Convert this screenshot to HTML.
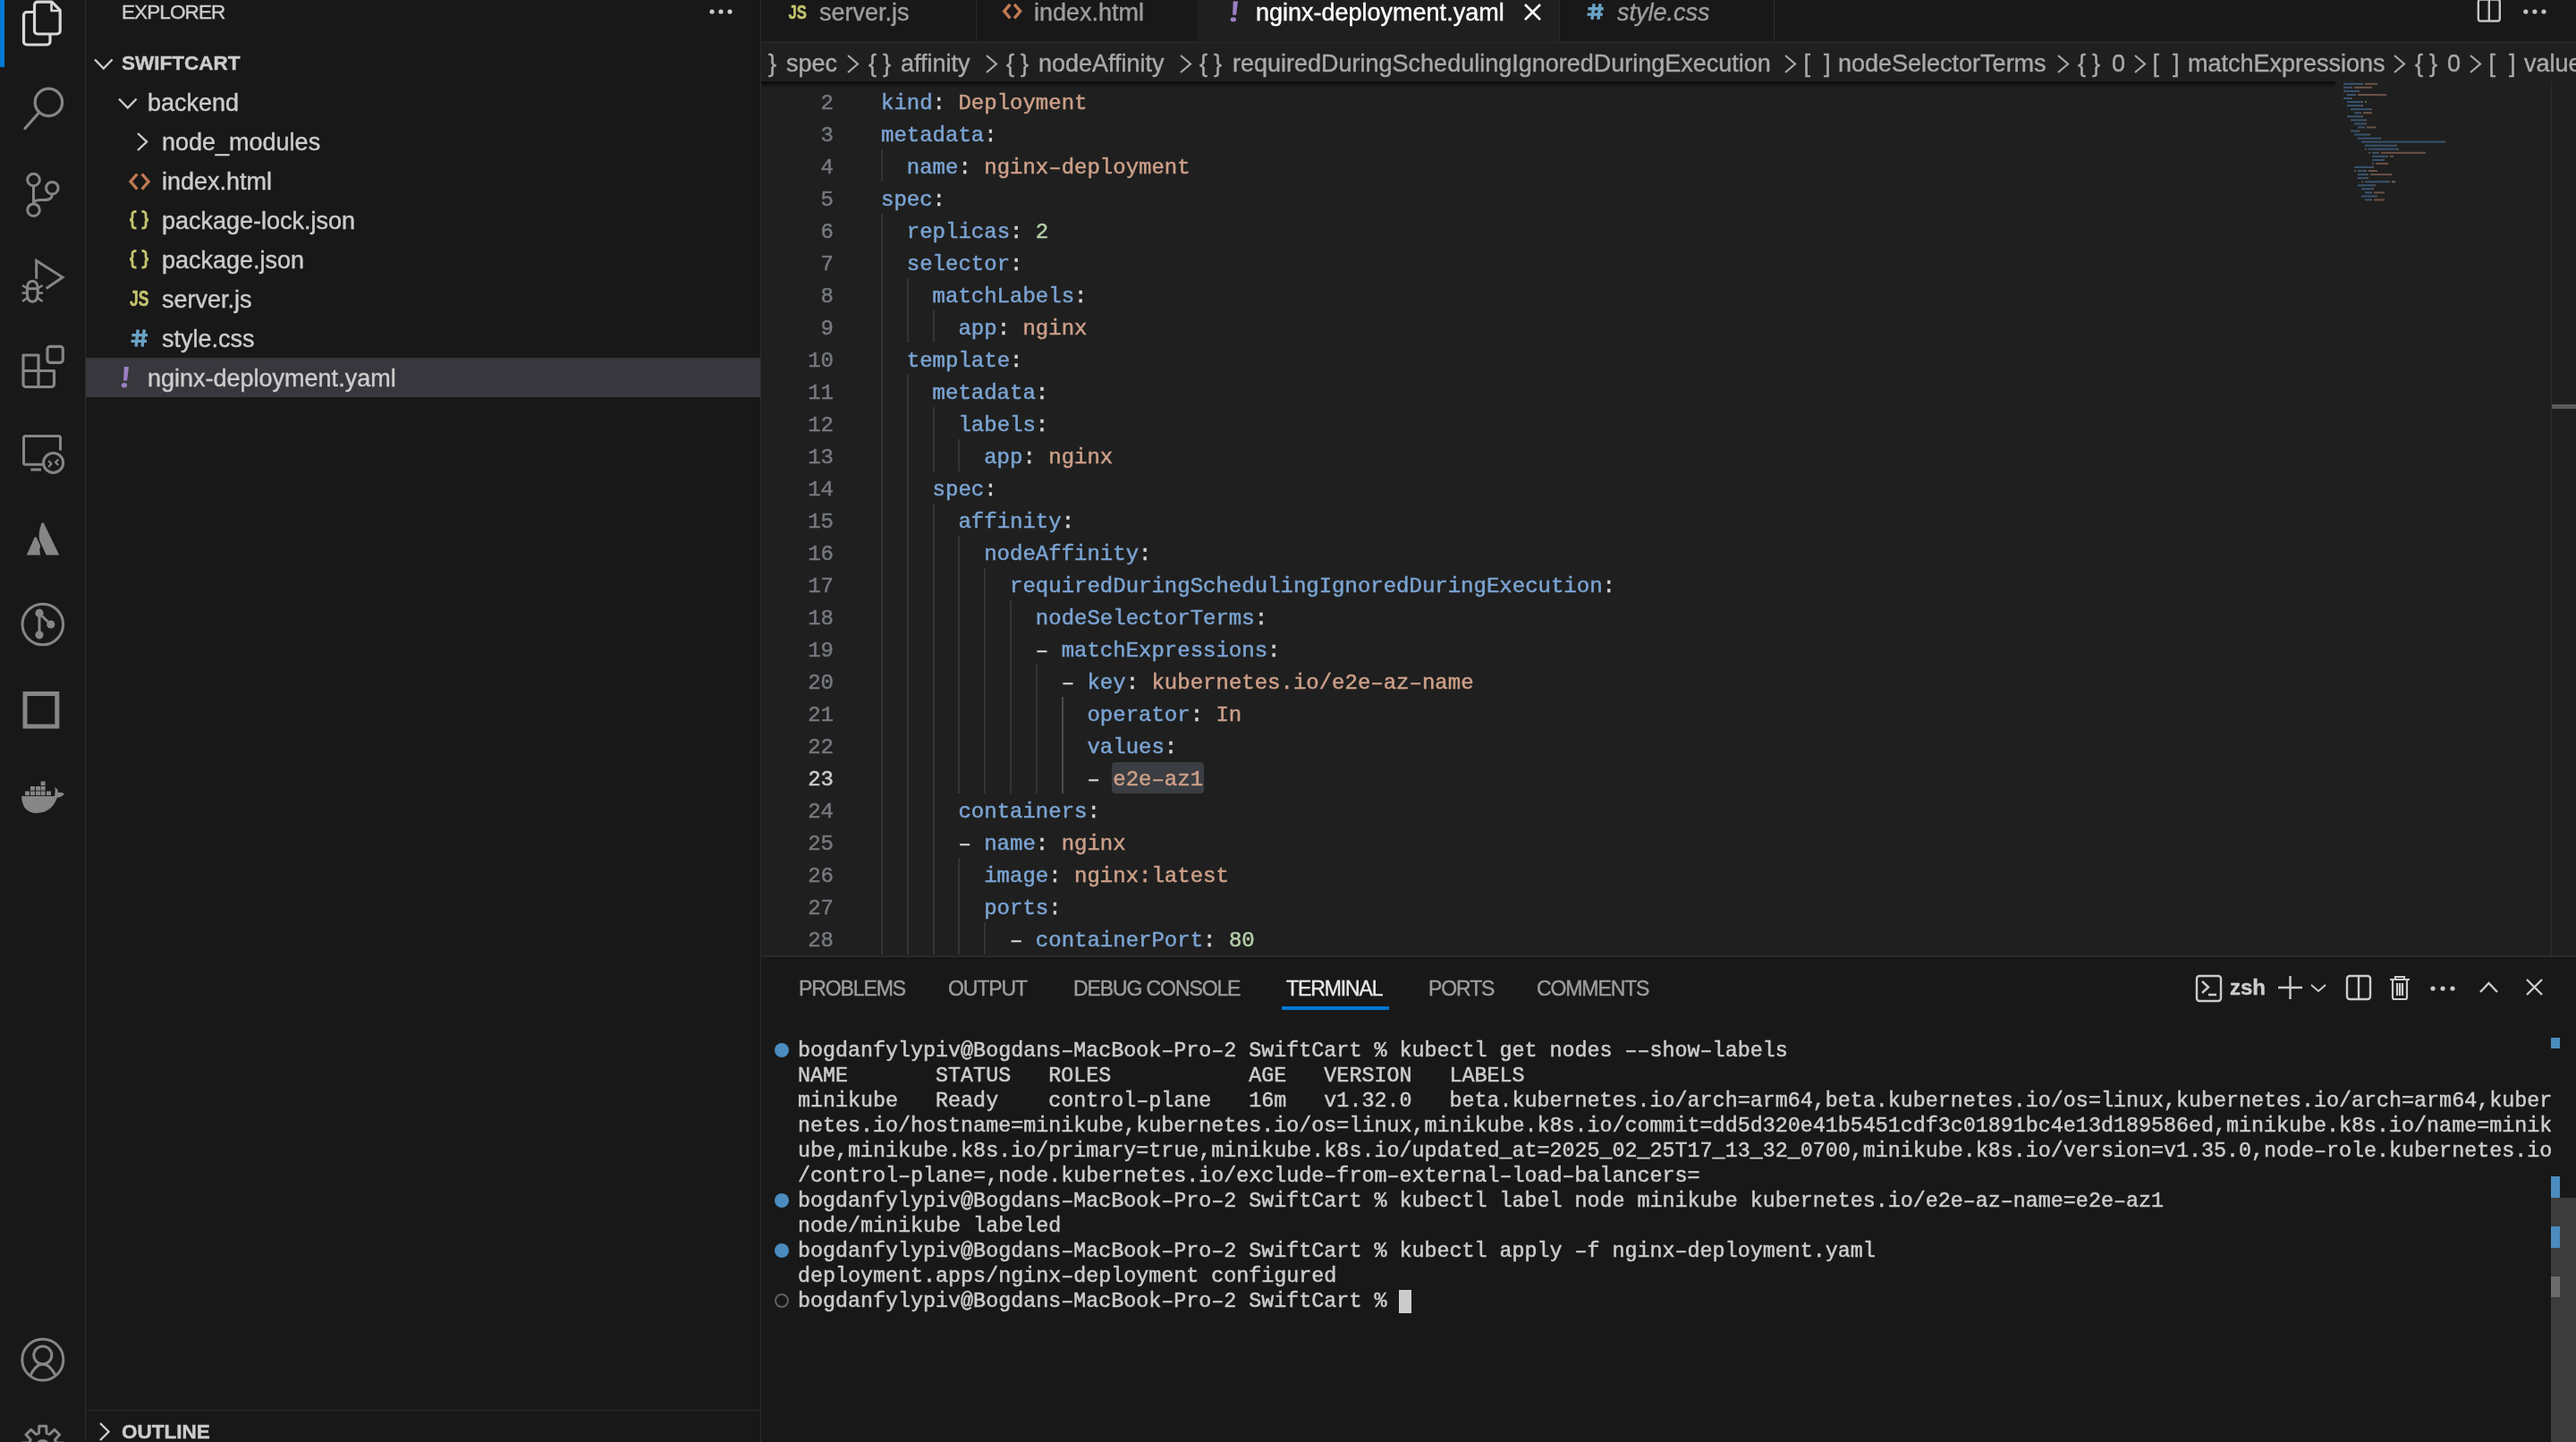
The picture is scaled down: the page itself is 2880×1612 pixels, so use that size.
<!DOCTYPE html><html><head><meta charset="utf-8"><style>
*{margin:0;padding:0;box-sizing:border-box}
html,body{width:2880px;height:1612px;overflow:hidden;background:#181818}
body{position:relative;font-family:"Liberation Sans",sans-serif;color:#cccccc;-webkit-font-smoothing:antialiased}
#root{position:absolute;left:0;top:0;width:2880px;height:1612px;overflow:hidden;will-change:transform;background:#181818}
.a{position:absolute;white-space:pre}
svg{position:absolute;left:0;top:0;overflow:visible}
.mono{font-family:"Liberation Mono",monospace;-webkit-text-stroke:0.5px currentColor}
.k{color:#7aa3d2}.s{color:#cc9f88}.n{color:#b5cea8}.p{color:#d4d4d4}
</style></head><body><div id="root">
<div class="a" style="left:0px;top:0px;width:95px;height:1612px;background:#181818;"></div>
<div class="a" style="left:95px;top:0px;width:1px;height:1612px;background:#2b2b2b;"></div>
<div class="a" style="left:96px;top:0px;width:754px;height:1612px;background:#181818;"></div>
<div class="a" style="left:850px;top:0px;width:1px;height:1612px;background:#2b2b2b;"></div>
<div class="a" style="left:851px;top:0px;width:2029px;height:1068px;background:#1f1f1f;"></div>
<div class="a" style="left:851px;top:1068px;width:2029px;height:2px;background:#2b2b2b;"></div>
<div class="a" style="left:851px;top:1070px;width:2029px;height:542px;background:#181818;"></div>
<div class="a" style="left:0px;top:0px;width:5px;height:75px;background:#0078d4;"></div>
<svg width="95" height="1612"><g fill="none" stroke="#d7d7d7" stroke-width="3.2" stroke-linejoin="round"><path d="M38.5 13.5 H30 a3.5 3.5 0 0 0 -3.5 3.5 V46.5 a3.5 3.5 0 0 0 3.5 3.5 H52.5 a3.5 3.5 0 0 0 3.5 -3.5 V38.5"/><path d="M42 2.2 H58 L67.2 11.4 V34.5 a3.5 3.5 0 0 1 -3.5 3.5 H42 a3.5 3.5 0 0 1 -3.5 -3.5 V5.7 a3.5 3.5 0 0 1 3.5 -3.5 Z"/><path d="M57.5 3 V12 H66.5" stroke-width="2.6"/></g><g fill="none" stroke="#868686" stroke-width="3.2" stroke-linecap="round"><circle cx="54.4" cy="114.4" r="15.2"/><path d="M43.5 126 L28 143.5"/></g><g fill="none" stroke="#868686" stroke-width="3"><circle cx="37.5" cy="201" r="6.8"/><circle cx="58.3" cy="210.2" r="6.8"/><circle cx="37.5" cy="234.7" r="6.8"/><path d="M37.5 207.8 V227.9"/><path d="M58.3 217 C58.3 224 52 223.5 45 223.5 C40 223.5 37.5 225 37.5 228"/></g><g fill="none" stroke="#868686" stroke-width="3" stroke-linejoin="miter"><path d="M40.7 311.7 V291.5 L70 310 L51.7 322.5"/><path d="M30.4 323 Q30.4 314.3 36.3 314.3 Q42.2 314.3 42.2 323 V328 Q42.2 337.3 36.3 337.3 Q30.4 337.3 30.4 328 Z"/><path d="M30.4 322.7 H42.2"/><path d="M25 319 L30.5 322.3 M24.5 327.5 H30 M25 337 L30.5 333 M47.6 319 L42 322.3 M48 327.5 H42.6 M47.6 337 L42 333" stroke-width="2.6"/></g><g fill="none" stroke="#868686" stroke-width="3.2" stroke-linejoin="round"><path d="M26 397 H43 V414.5 H26 Z M26 414.5 H43 V432.5 H29 a3 3 0 0 1 -3 -3 Z M43 414.5 H60.5 V429.5 a3 3 0 0 1 -3 3 H43 Z"/><rect x="53" y="387.3" width="17.3" height="18" rx="3"/></g><g fill="none" stroke="#868686" stroke-width="3"><path d="M48 519.2 H28.5 a2 2 0 0 1 -2 -2 V489.5 a2 2 0 0 1 2 -2 H65.5 a2 2 0 0 1 2 2 V503.5"/><path d="M34.3 525 H46"/><circle cx="59.6" cy="517.4" r="11"/><path d="M54.3 515 L57.4 518.5 L54.3 522 M65.3 513.5 L62 516.7 L65.3 520" stroke-width="2.2"/></g><g fill="#868686"><path d="M29.8 620.5 L38.3 601.5 Q39.7 598.8 41.1 601.5 L45.3 610.5 Q43.6 615 45.2 620.5 Z"/><path d="M51.8 620.5 L44.5 605 Q42 597 46.3 585.5 Q47.8 582.5 49.3 585.5 L66.2 620.5 Z"/></g><g fill="none" stroke="#868686" stroke-width="3"><circle cx="47.8" cy="698" r="22.8"/><path d="M44 686 V709 M44 686 L56.8 698"/></g><g fill="#868686"><circle cx="44" cy="685.4" r="4.6"/><circle cx="56.8" cy="698" r="4.6"/><circle cx="44" cy="709.8" r="4.6"/></g><rect x="28" y="775.5" width="35.8" height="36.5" fill="none" stroke="#868686" stroke-width="5"/><g fill="#868686"><rect x="28" y="884.5" width="5" height="4.6"/><rect x="34" y="884.5" width="5" height="4.6"/><rect x="40" y="884.5" width="5" height="4.6"/><rect x="45.6" y="884.5" width="5.0" height="4.6"/><rect x="52" y="884.5" width="5" height="4.6"/><rect x="34" y="879" width="5" height="4.6"/><rect x="40" y="879" width="5" height="4.6"/><rect x="45.6" y="879" width="5.0" height="4.6"/><rect x="45.6" y="873.5" width="5" height="4.6"/><path d="M24 890 H61 Q62 884 61.5 880 Q65 882 65 886 Q69 885 72 887.5 Q68 892 64 891.5 Q58 908.5 41 909 Q25 909 24 890 Z"/></g><g fill="none" stroke="#868686" stroke-width="3"><circle cx="47.8" cy="1520" r="23"/><circle cx="47.8" cy="1515" r="10"/><path d="M34 1537.5 Q40 1525 47.8 1525 Q55.6 1525 62 1537.5"/></g><g fill="none" stroke="#868686" stroke-width="3" stroke-linejoin="round"><path d="M43.5 1602.1 L43.8 1594.3 L51.8 1594.3 L52.1 1602.1 L55.3 1603.4 L61.0 1598.2 L66.6 1603.8 L61.4 1609.5 L62.7 1612.7 L70.5 1613.0 L70.5 1621.0 L62.7 1621.3 L61.4 1624.5 L66.6 1630.2 L61.0 1635.8 L55.3 1630.6 L52.1 1631.9 L51.8 1639.7 L43.8 1639.7 L43.5 1631.9 L40.3 1630.6 L34.6 1635.8 L29.0 1630.2 L34.2 1624.5 L32.9 1621.3 L25.1 1621.0 L25.1 1613.0 L32.9 1612.7 L34.2 1609.5 L29.0 1603.8 L34.6 1598.2 L40.3 1603.4 Z"/><circle cx="47.8" cy="1617" r="6.5"/></g></svg>
<div class="a" style="left:136px;top:-3.20px;line-height:34px;font-size:22.5px;font-family:'Liberation Sans';font-weight:normal;font-style:normal;color:#cccccc;-webkit-text-stroke:0.4px #cccccc;letter-spacing:-0.9px">EXPLORER</div>
<svg width="2880" height="1612"><g fill="#cccccc"><circle cx="796" cy="13" r="2.6"/><circle cx="806" cy="13" r="2.6"/><circle cx="816" cy="13" r="2.6"/></g></svg>
<svg width="2880" height="1612"><g fill="none" stroke="#cccccc" stroke-width="2.4"><path d="M106 66.5 L115.8 76.5 L125.6 66.5"/><path d="M133 110.5 L142.8 120.5 L152.6 110.5"/><path d="M154 149 L164 158.5 L154 168"/></g></svg>
<div class="a" style="left:136px;top:53.50px;line-height:34px;font-size:22.5px;font-family:'Liberation Sans';font-weight:bold;font-style:normal;color:#cccccc;-webkit-text-stroke:0.4px #cccccc;">SWIFTCART</div>
<div class="a" style="left:96px;top:400px;width:754px;height:44px;background:#37373d;"></div>
<div class="a" style="left:165px;top:94.64px;line-height:40px;font-size:27px;font-family:'Liberation Sans';font-weight:normal;font-style:normal;color:#cccccc;-webkit-text-stroke:0.4px #cccccc;">backend</div>
<div class="a" style="left:181px;top:138.64px;line-height:40px;font-size:27px;font-family:'Liberation Sans';font-weight:normal;font-style:normal;color:#cccccc;-webkit-text-stroke:0.4px #cccccc;">node_modules</div>
<div class="a" style="left:181px;top:182.64px;line-height:40px;font-size:27px;font-family:'Liberation Sans';font-weight:normal;font-style:normal;color:#cccccc;-webkit-text-stroke:0.4px #cccccc;">index.html</div>
<div class="a" style="left:181px;top:226.64px;line-height:40px;font-size:27px;font-family:'Liberation Sans';font-weight:normal;font-style:normal;color:#cccccc;-webkit-text-stroke:0.4px #cccccc;">package-lock.json</div>
<div class="a" style="left:181px;top:270.64px;line-height:40px;font-size:27px;font-family:'Liberation Sans';font-weight:normal;font-style:normal;color:#cccccc;-webkit-text-stroke:0.4px #cccccc;">package.json</div>
<div class="a" style="left:181px;top:314.64px;line-height:40px;font-size:27px;font-family:'Liberation Sans';font-weight:normal;font-style:normal;color:#cccccc;-webkit-text-stroke:0.4px #cccccc;">server.js</div>
<div class="a" style="left:181px;top:358.64px;line-height:40px;font-size:27px;font-family:'Liberation Sans';font-weight:normal;font-style:normal;color:#cccccc;-webkit-text-stroke:0.4px #cccccc;">style.css</div>
<div class="a" style="left:165px;top:402.64px;line-height:40px;font-size:27px;font-family:'Liberation Sans';font-weight:normal;font-style:normal;color:#cccccc;-webkit-text-stroke:0.4px #cccccc;">nginx-deployment.yaml</div>
<div class="a" style="left:851px;top:0px;width:2029px;height:46px;background:#181818;"></div>
<div class="a" style="left:851px;top:46px;width:2029px;height:2px;background:#262626;"></div>
<div class="a" style="left:1091px;top:0px;width:1px;height:46px;background:#2b2b2b;"></div>
<div class="a" style="left:1339px;top:0px;width:1px;height:46px;background:#2b2b2b;"></div>
<div class="a" style="left:1339px;top:0px;width:404px;height:47px;background:#1f1f1f;"></div>
<div class="a" style="left:1743px;top:0px;width:1px;height:46px;background:#2b2b2b;"></div>
<div class="a" style="left:1983px;top:0px;width:1px;height:46px;background:#2b2b2b;"></div>
<div class="a" style="left:916px;top:-6.36px;line-height:40px;font-size:27px;font-family:'Liberation Sans';font-weight:normal;font-style:normal;color:#9d9d9d;-webkit-text-stroke:0.4px #9d9d9d;">server.js</div>
<div class="a" style="left:1156px;top:-6.36px;line-height:40px;font-size:27px;font-family:'Liberation Sans';font-weight:normal;font-style:normal;color:#9d9d9d;-webkit-text-stroke:0.4px #9d9d9d;">index.html</div>
<div class="a" style="left:1404px;top:-6.36px;line-height:40px;font-size:27px;font-family:'Liberation Sans';font-weight:normal;font-style:normal;color:#ffffff;-webkit-text-stroke:0.4px #ffffff;">nginx-deployment.yaml</div>
<svg width="2880" height="1612"><g fill="none" stroke="#ffffff" stroke-width="2.6"><path d="M1705 5 L1722 22 M1722 5 L1705 22"/></g></svg>
<div class="a" style="left:1808px;top:-6.36px;line-height:40px;font-size:27px;font-family:'Liberation Sans';font-weight:normal;font-style:italic;color:#9d9d9d;-webkit-text-stroke:0.4px #9d9d9d;">style.css</div>
<svg width="2880" height="1612"><g fill="none" stroke="#c4c4c4" stroke-width="2.4"><rect x="2770.8" y="-0.5" width="24" height="24" rx="2.5"/><path d="M2782.8 0 V23.5"/></g><g fill="#c4c4c4"><circle cx="2823.8" cy="13" r="2.6"/><circle cx="2833.9" cy="13" r="2.6"/><circle cx="2844" cy="13" r="2.6"/></g></svg>
<svg width="2880" height="1612"><g fill="none" stroke="#a9a9a9" stroke-width="2.2"><path d="M948 62 L959 71.5 L948 81"/><path d="M1103 62 L1114 71.5 L1103 81"/><path d="M1320 62 L1331 71.5 L1320 81"/><path d="M1996 62 L2007 71.5 L1996 81"/><path d="M2301 62 L2312 71.5 L2301 81"/><path d="M2387 62 L2398 71.5 L2387 81"/><path d="M2677 62 L2688 71.5 L2677 81"/><path d="M2762 62 L2773 71.5 L2762 81"/></g></svg>
<div class="a" style="left:859px;top:50.64px;line-height:40px;font-size:27px;font-family:'Liberation Sans';font-weight:normal;font-style:normal;color:#a9a9a9;-webkit-text-stroke:0.4px #a9a9a9;">}</div>
<div class="a" style="left:879px;top:50.64px;line-height:40px;font-size:27px;font-family:'Liberation Sans';font-weight:normal;font-style:normal;color:#a9a9a9;-webkit-text-stroke:0.4px #a9a9a9;">spec</div>
<div class="a" style="left:971px;top:50.64px;line-height:40px;font-size:27px;font-family:'Liberation Sans';font-weight:normal;font-style:normal;color:#a9a9a9;-webkit-text-stroke:0.4px #a9a9a9;">{</div>
<div class="a" style="left:987px;top:50.64px;line-height:40px;font-size:27px;font-family:'Liberation Sans';font-weight:normal;font-style:normal;color:#a9a9a9;-webkit-text-stroke:0.4px #a9a9a9;">}</div>
<div class="a" style="left:1007px;top:50.64px;line-height:40px;font-size:27px;font-family:'Liberation Sans';font-weight:normal;font-style:normal;color:#a9a9a9;-webkit-text-stroke:0.4px #a9a9a9;">affinity</div>
<div class="a" style="left:1125px;top:50.64px;line-height:40px;font-size:27px;font-family:'Liberation Sans';font-weight:normal;font-style:normal;color:#a9a9a9;-webkit-text-stroke:0.4px #a9a9a9;">{</div>
<div class="a" style="left:1141px;top:50.64px;line-height:40px;font-size:27px;font-family:'Liberation Sans';font-weight:normal;font-style:normal;color:#a9a9a9;-webkit-text-stroke:0.4px #a9a9a9;">}</div>
<div class="a" style="left:1161px;top:50.64px;line-height:40px;font-size:27px;font-family:'Liberation Sans';font-weight:normal;font-style:normal;color:#a9a9a9;-webkit-text-stroke:0.4px #a9a9a9;">nodeAffinity</div>
<div class="a" style="left:1341px;top:50.64px;line-height:40px;font-size:27px;font-family:'Liberation Sans';font-weight:normal;font-style:normal;color:#a9a9a9;-webkit-text-stroke:0.4px #a9a9a9;">{</div>
<div class="a" style="left:1357px;top:50.64px;line-height:40px;font-size:27px;font-family:'Liberation Sans';font-weight:normal;font-style:normal;color:#a9a9a9;-webkit-text-stroke:0.4px #a9a9a9;">}</div>
<div class="a" style="left:1378px;top:50.64px;line-height:40px;font-size:27px;font-family:'Liberation Sans';font-weight:normal;font-style:normal;color:#a9a9a9;-webkit-text-stroke:0.4px #a9a9a9;">requiredDuringSchedulingIgnoredDuringExecution</div>
<div class="a" style="left:2016.5px;top:50.64px;line-height:40px;font-size:27px;font-family:'Liberation Sans';font-weight:normal;font-style:normal;color:#a9a9a9;-webkit-text-stroke:0.4px #a9a9a9;">[</div>
<div class="a" style="left:2039px;top:50.64px;line-height:40px;font-size:27px;font-family:'Liberation Sans';font-weight:normal;font-style:normal;color:#a9a9a9;-webkit-text-stroke:0.4px #a9a9a9;">]</div>
<div class="a" style="left:2055px;top:50.64px;line-height:40px;font-size:27px;font-family:'Liberation Sans';font-weight:normal;font-style:normal;color:#a9a9a9;-webkit-text-stroke:0.4px #a9a9a9;">nodeSelectorTerms</div>
<div class="a" style="left:2323px;top:50.64px;line-height:40px;font-size:27px;font-family:'Liberation Sans';font-weight:normal;font-style:normal;color:#a9a9a9;-webkit-text-stroke:0.4px #a9a9a9;">{</div>
<div class="a" style="left:2339px;top:50.64px;line-height:40px;font-size:27px;font-family:'Liberation Sans';font-weight:normal;font-style:normal;color:#a9a9a9;-webkit-text-stroke:0.4px #a9a9a9;">}</div>
<div class="a" style="left:2361px;top:50.64px;line-height:40px;font-size:27px;font-family:'Liberation Sans';font-weight:normal;font-style:normal;color:#a9a9a9;-webkit-text-stroke:0.4px #a9a9a9;">0</div>
<div class="a" style="left:2406.5px;top:50.64px;line-height:40px;font-size:27px;font-family:'Liberation Sans';font-weight:normal;font-style:normal;color:#a9a9a9;-webkit-text-stroke:0.4px #a9a9a9;">[</div>
<div class="a" style="left:2429px;top:50.64px;line-height:40px;font-size:27px;font-family:'Liberation Sans';font-weight:normal;font-style:normal;color:#a9a9a9;-webkit-text-stroke:0.4px #a9a9a9;">]</div>
<div class="a" style="left:2446px;top:50.64px;line-height:40px;font-size:27px;font-family:'Liberation Sans';font-weight:normal;font-style:normal;color:#a9a9a9;-webkit-text-stroke:0.4px #a9a9a9;">matchExpressions</div>
<div class="a" style="left:2700px;top:50.64px;line-height:40px;font-size:27px;font-family:'Liberation Sans';font-weight:normal;font-style:normal;color:#a9a9a9;-webkit-text-stroke:0.4px #a9a9a9;">{</div>
<div class="a" style="left:2716px;top:50.64px;line-height:40px;font-size:27px;font-family:'Liberation Sans';font-weight:normal;font-style:normal;color:#a9a9a9;-webkit-text-stroke:0.4px #a9a9a9;">}</div>
<div class="a" style="left:2736px;top:50.64px;line-height:40px;font-size:27px;font-family:'Liberation Sans';font-weight:normal;font-style:normal;color:#a9a9a9;-webkit-text-stroke:0.4px #a9a9a9;">0</div>
<div class="a" style="left:2782.5px;top:50.64px;line-height:40px;font-size:27px;font-family:'Liberation Sans';font-weight:normal;font-style:normal;color:#a9a9a9;-webkit-text-stroke:0.4px #a9a9a9;">[</div>
<div class="a" style="left:2805px;top:50.64px;line-height:40px;font-size:27px;font-family:'Liberation Sans';font-weight:normal;font-style:normal;color:#a9a9a9;-webkit-text-stroke:0.4px #a9a9a9;">]</div>
<div class="a" style="left:2822px;top:50.64px;line-height:40px;font-size:27px;font-family:'Liberation Sans';font-weight:normal;font-style:normal;color:#a9a9a9;-webkit-text-stroke:0.4px #a9a9a9;">values</div>
<div class="a" style="left:851px;top:91px;width:1760px;height:7px;background:linear-gradient(#000000b0,#00000000)"></div>
<div class="a" style="left:985.0px;top:167px;width:2px;height:36px;background:#343434;"></div>
<div class="a" style="left:985.0px;top:239px;width:2px;height:828px;background:#343434;"></div>
<div class="a" style="left:1013.8px;top:311px;width:2px;height:72px;background:#343434;"></div>
<div class="a" style="left:1013.8px;top:419px;width:2px;height:648px;background:#343434;"></div>
<div class="a" style="left:1042.6px;top:347px;width:2px;height:36px;background:#343434;"></div>
<div class="a" style="left:1042.6px;top:455px;width:2px;height:72px;background:#343434;"></div>
<div class="a" style="left:1042.6px;top:563px;width:2px;height:504px;background:#343434;"></div>
<div class="a" style="left:1071.4px;top:491px;width:2px;height:36px;background:#343434;"></div>
<div class="a" style="left:1071.4px;top:599px;width:2px;height:288px;background:#343434;"></div>
<div class="a" style="left:1071.4px;top:959px;width:2px;height:108px;background:#343434;"></div>
<div class="a" style="left:1100.2px;top:635px;width:2px;height:252px;background:#343434;"></div>
<div class="a" style="left:1100.2px;top:1031px;width:2px;height:36px;background:#343434;"></div>
<div class="a" style="left:1129.0px;top:671px;width:2px;height:216px;background:#343434;"></div>
<div class="a" style="left:1157.8px;top:743px;width:2px;height:144px;background:#343434;"></div>
<div class="a" style="left:1186.6px;top:779px;width:2px;height:108px;background:#4a4a4a;"></div>
<div class="a" style="left:1243.2px;top:852px;width:102.8px;height:35px;background:#3a3d41;border-radius:4px"></div>
<div class="a mono" style="left:0;top:0;font-size:24px">
<div class="a" style="left:851px;top:98px;width:81px;height:36px;line-height:36px;text-align:right;color:#75787e">2</div>
<div class="a" style="left:985px;top:98px;height:36px;line-height:36px"><span class="k">kind</span><span class="p">: </span><span class="s">Deployment</span></div>
<div class="a" style="left:851px;top:134px;width:81px;height:36px;line-height:36px;text-align:right;color:#75787e">3</div>
<div class="a" style="left:985px;top:134px;height:36px;line-height:36px"><span class="k">metadata</span><span class="p">:</span></div>
<div class="a" style="left:851px;top:170px;width:81px;height:36px;line-height:36px;text-align:right;color:#75787e">4</div>
<div class="a" style="left:985px;top:170px;height:36px;line-height:36px"><span class="p">  </span><span class="k">name</span><span class="p">: </span><span class="s">nginx–deployment</span></div>
<div class="a" style="left:851px;top:206px;width:81px;height:36px;line-height:36px;text-align:right;color:#75787e">5</div>
<div class="a" style="left:985px;top:206px;height:36px;line-height:36px"><span class="k">spec</span><span class="p">:</span></div>
<div class="a" style="left:851px;top:242px;width:81px;height:36px;line-height:36px;text-align:right;color:#75787e">6</div>
<div class="a" style="left:985px;top:242px;height:36px;line-height:36px"><span class="p">  </span><span class="k">replicas</span><span class="p">: </span><span class="n">2</span></div>
<div class="a" style="left:851px;top:278px;width:81px;height:36px;line-height:36px;text-align:right;color:#75787e">7</div>
<div class="a" style="left:985px;top:278px;height:36px;line-height:36px"><span class="p">  </span><span class="k">selector</span><span class="p">:</span></div>
<div class="a" style="left:851px;top:314px;width:81px;height:36px;line-height:36px;text-align:right;color:#75787e">8</div>
<div class="a" style="left:985px;top:314px;height:36px;line-height:36px"><span class="p">    </span><span class="k">matchLabels</span><span class="p">:</span></div>
<div class="a" style="left:851px;top:350px;width:81px;height:36px;line-height:36px;text-align:right;color:#75787e">9</div>
<div class="a" style="left:985px;top:350px;height:36px;line-height:36px"><span class="p">      </span><span class="k">app</span><span class="p">: </span><span class="s">nginx</span></div>
<div class="a" style="left:851px;top:386px;width:81px;height:36px;line-height:36px;text-align:right;color:#75787e">10</div>
<div class="a" style="left:985px;top:386px;height:36px;line-height:36px"><span class="p">  </span><span class="k">template</span><span class="p">:</span></div>
<div class="a" style="left:851px;top:422px;width:81px;height:36px;line-height:36px;text-align:right;color:#75787e">11</div>
<div class="a" style="left:985px;top:422px;height:36px;line-height:36px"><span class="p">    </span><span class="k">metadata</span><span class="p">:</span></div>
<div class="a" style="left:851px;top:458px;width:81px;height:36px;line-height:36px;text-align:right;color:#75787e">12</div>
<div class="a" style="left:985px;top:458px;height:36px;line-height:36px"><span class="p">      </span><span class="k">labels</span><span class="p">:</span></div>
<div class="a" style="left:851px;top:494px;width:81px;height:36px;line-height:36px;text-align:right;color:#75787e">13</div>
<div class="a" style="left:985px;top:494px;height:36px;line-height:36px"><span class="p">        </span><span class="k">app</span><span class="p">: </span><span class="s">nginx</span></div>
<div class="a" style="left:851px;top:530px;width:81px;height:36px;line-height:36px;text-align:right;color:#75787e">14</div>
<div class="a" style="left:985px;top:530px;height:36px;line-height:36px"><span class="p">    </span><span class="k">spec</span><span class="p">:</span></div>
<div class="a" style="left:851px;top:566px;width:81px;height:36px;line-height:36px;text-align:right;color:#75787e">15</div>
<div class="a" style="left:985px;top:566px;height:36px;line-height:36px"><span class="p">      </span><span class="k">affinity</span><span class="p">:</span></div>
<div class="a" style="left:851px;top:602px;width:81px;height:36px;line-height:36px;text-align:right;color:#75787e">16</div>
<div class="a" style="left:985px;top:602px;height:36px;line-height:36px"><span class="p">        </span><span class="k">nodeAffinity</span><span class="p">:</span></div>
<div class="a" style="left:851px;top:638px;width:81px;height:36px;line-height:36px;text-align:right;color:#75787e">17</div>
<div class="a" style="left:985px;top:638px;height:36px;line-height:36px"><span class="p">          </span><span class="k">requiredDuringSchedulingIgnoredDuringExecution</span><span class="p">:</span></div>
<div class="a" style="left:851px;top:674px;width:81px;height:36px;line-height:36px;text-align:right;color:#75787e">18</div>
<div class="a" style="left:985px;top:674px;height:36px;line-height:36px"><span class="p">            </span><span class="k">nodeSelectorTerms</span><span class="p">:</span></div>
<div class="a" style="left:851px;top:710px;width:81px;height:36px;line-height:36px;text-align:right;color:#75787e">19</div>
<div class="a" style="left:985px;top:710px;height:36px;line-height:36px"><span class="p">            – </span><span class="k">matchExpressions</span><span class="p">:</span></div>
<div class="a" style="left:851px;top:746px;width:81px;height:36px;line-height:36px;text-align:right;color:#75787e">20</div>
<div class="a" style="left:985px;top:746px;height:36px;line-height:36px"><span class="p">              – </span><span class="k">key</span><span class="p">: </span><span class="s">kubernetes.io/e2e–az–name</span></div>
<div class="a" style="left:851px;top:782px;width:81px;height:36px;line-height:36px;text-align:right;color:#75787e">21</div>
<div class="a" style="left:985px;top:782px;height:36px;line-height:36px"><span class="p">                </span><span class="k">operator</span><span class="p">: </span><span class="s">In</span></div>
<div class="a" style="left:851px;top:818px;width:81px;height:36px;line-height:36px;text-align:right;color:#75787e">22</div>
<div class="a" style="left:985px;top:818px;height:36px;line-height:36px"><span class="p">                </span><span class="k">values</span><span class="p">:</span></div>
<div class="a" style="left:851px;top:854px;width:81px;height:36px;line-height:36px;text-align:right;color:#cccccc">23</div>
<div class="a" style="left:985px;top:854px;height:36px;line-height:36px"><span class="p">                – </span><span class="s">e2e–az1</span></div>
<div class="a" style="left:851px;top:890px;width:81px;height:36px;line-height:36px;text-align:right;color:#75787e">24</div>
<div class="a" style="left:985px;top:890px;height:36px;line-height:36px"><span class="p">      </span><span class="k">containers</span><span class="p">:</span></div>
<div class="a" style="left:851px;top:926px;width:81px;height:36px;line-height:36px;text-align:right;color:#75787e">25</div>
<div class="a" style="left:985px;top:926px;height:36px;line-height:36px"><span class="p">      – </span><span class="k">name</span><span class="p">: </span><span class="s">nginx</span></div>
<div class="a" style="left:851px;top:962px;width:81px;height:36px;line-height:36px;text-align:right;color:#75787e">26</div>
<div class="a" style="left:985px;top:962px;height:36px;line-height:36px"><span class="p">        </span><span class="k">image</span><span class="p">: </span><span class="s">nginx:latest</span></div>
<div class="a" style="left:851px;top:998px;width:81px;height:36px;line-height:36px;text-align:right;color:#75787e">27</div>
<div class="a" style="left:985px;top:998px;height:36px;line-height:36px"><span class="p">        </span><span class="k">ports</span><span class="p">:</span></div>
<div class="a" style="left:851px;top:1034px;width:81px;height:36px;line-height:36px;text-align:right;color:#75787e">28</div>
<div class="a" style="left:985px;top:1034px;height:36px;line-height:36px"><span class="p">          – </span><span class="k">containerPort</span><span class="p">: </span><span class="n">80</span></div>
</div>
<svg width="2880" height="1612"><rect x="2620.0" y="92.8" width="20.0" height="2" fill="#4a77a6" opacity="0.6"/><rect x="2640.0" y="92.8" width="2.0" height="2" fill="#777777" opacity="0.6"/><rect x="2644.0" y="92.8" width="14.0" height="2" fill="#9c7460" opacity="0.6"/><rect x="2620.0" y="96.8" width="8.0" height="2" fill="#4a77a6" opacity="0.6"/><rect x="2628.0" y="96.8" width="2.0" height="2" fill="#777777" opacity="0.6"/><rect x="2632.0" y="96.8" width="20.0" height="2" fill="#9c7460" opacity="0.6"/><rect x="2620.0" y="100.9" width="16.0" height="2" fill="#4a77a6" opacity="0.6"/><rect x="2636.0" y="100.9" width="2.0" height="2" fill="#777777" opacity="0.6"/><rect x="2624.0" y="105.0" width="8.0" height="2" fill="#4a77a6" opacity="0.6"/><rect x="2632.0" y="105.0" width="2.0" height="2" fill="#777777" opacity="0.6"/><rect x="2636.0" y="105.0" width="32.0" height="2" fill="#9c7460" opacity="0.6"/><rect x="2620.0" y="109.0" width="8.0" height="2" fill="#4a77a6" opacity="0.6"/><rect x="2628.0" y="109.0" width="2.0" height="2" fill="#777777" opacity="0.6"/><rect x="2624.0" y="113.0" width="16.0" height="2" fill="#4a77a6" opacity="0.6"/><rect x="2640.0" y="113.0" width="2.0" height="2" fill="#777777" opacity="0.6"/><rect x="2644.0" y="113.0" width="2.0" height="2" fill="#7f9a78" opacity="0.6"/><rect x="2624.0" y="117.1" width="16.0" height="2" fill="#4a77a6" opacity="0.6"/><rect x="2640.0" y="117.1" width="2.0" height="2" fill="#777777" opacity="0.6"/><rect x="2628.0" y="121.1" width="22.0" height="2" fill="#4a77a6" opacity="0.6"/><rect x="2650.0" y="121.1" width="2.0" height="2" fill="#777777" opacity="0.6"/><rect x="2632.0" y="125.2" width="6.0" height="2" fill="#4a77a6" opacity="0.6"/><rect x="2638.0" y="125.2" width="2.0" height="2" fill="#777777" opacity="0.6"/><rect x="2642.0" y="125.2" width="10.0" height="2" fill="#9c7460" opacity="0.6"/><rect x="2624.0" y="129.2" width="16.0" height="2" fill="#4a77a6" opacity="0.6"/><rect x="2640.0" y="129.2" width="2.0" height="2" fill="#777777" opacity="0.6"/><rect x="2628.0" y="133.3" width="16.0" height="2" fill="#4a77a6" opacity="0.6"/><rect x="2644.0" y="133.3" width="2.0" height="2" fill="#777777" opacity="0.6"/><rect x="2632.0" y="137.4" width="12.0" height="2" fill="#4a77a6" opacity="0.6"/><rect x="2644.0" y="137.4" width="2.0" height="2" fill="#777777" opacity="0.6"/><rect x="2636.0" y="141.4" width="6.0" height="2" fill="#4a77a6" opacity="0.6"/><rect x="2642.0" y="141.4" width="2.0" height="2" fill="#777777" opacity="0.6"/><rect x="2646.0" y="141.4" width="10.0" height="2" fill="#9c7460" opacity="0.6"/><rect x="2628.0" y="145.5" width="8.0" height="2" fill="#4a77a6" opacity="0.6"/><rect x="2636.0" y="145.5" width="2.0" height="2" fill="#777777" opacity="0.6"/><rect x="2632.0" y="149.5" width="16.0" height="2" fill="#4a77a6" opacity="0.6"/><rect x="2648.0" y="149.5" width="2.0" height="2" fill="#777777" opacity="0.6"/><rect x="2636.0" y="153.6" width="24.0" height="2" fill="#4a77a6" opacity="0.6"/><rect x="2660.0" y="153.6" width="2.0" height="2" fill="#777777" opacity="0.6"/><rect x="2640.0" y="157.6" width="92.0" height="2" fill="#4a77a6" opacity="0.6"/><rect x="2732.0" y="157.6" width="2.0" height="2" fill="#777777" opacity="0.6"/><rect x="2644.0" y="161.7" width="34.0" height="2" fill="#4a77a6" opacity="0.6"/><rect x="2678.0" y="161.7" width="2.0" height="2" fill="#777777" opacity="0.6"/><rect x="2644.0" y="165.7" width="2.0" height="2" fill="#777777" opacity="0.6"/><rect x="2648.0" y="165.7" width="32.0" height="2" fill="#4a77a6" opacity="0.6"/><rect x="2680.0" y="165.7" width="2.0" height="2" fill="#777777" opacity="0.6"/><rect x="2648.0" y="169.8" width="2.0" height="2" fill="#777777" opacity="0.6"/><rect x="2652.0" y="169.8" width="6.0" height="2" fill="#4a77a6" opacity="0.6"/><rect x="2658.0" y="169.8" width="2.0" height="2" fill="#777777" opacity="0.6"/><rect x="2662.0" y="169.8" width="50.0" height="2" fill="#9c7460" opacity="0.6"/><rect x="2652.0" y="173.8" width="16.0" height="2" fill="#4a77a6" opacity="0.6"/><rect x="2668.0" y="173.8" width="2.0" height="2" fill="#777777" opacity="0.6"/><rect x="2672.0" y="173.8" width="4.0" height="2" fill="#9c7460" opacity="0.6"/><rect x="2652.0" y="177.9" width="12.0" height="2" fill="#4a77a6" opacity="0.6"/><rect x="2664.0" y="177.9" width="2.0" height="2" fill="#777777" opacity="0.6"/><rect x="2652.0" y="181.9" width="2.0" height="2" fill="#777777" opacity="0.6"/><rect x="2656.0" y="181.9" width="14.0" height="2" fill="#9c7460" opacity="0.6"/><rect x="2632.0" y="185.9" width="20.0" height="2" fill="#4a77a6" opacity="0.6"/><rect x="2652.0" y="185.9" width="2.0" height="2" fill="#777777" opacity="0.6"/><rect x="2632.0" y="190.0" width="2.0" height="2" fill="#777777" opacity="0.6"/><rect x="2636.0" y="190.0" width="8.0" height="2" fill="#4a77a6" opacity="0.6"/><rect x="2644.0" y="190.0" width="2.0" height="2" fill="#777777" opacity="0.6"/><rect x="2648.0" y="190.0" width="10.0" height="2" fill="#9c7460" opacity="0.6"/><rect x="2636.0" y="194.1" width="10.0" height="2" fill="#4a77a6" opacity="0.6"/><rect x="2646.0" y="194.1" width="2.0" height="2" fill="#777777" opacity="0.6"/><rect x="2650.0" y="194.1" width="24.0" height="2" fill="#9c7460" opacity="0.6"/><rect x="2636.0" y="198.1" width="10.0" height="2" fill="#4a77a6" opacity="0.6"/><rect x="2646.0" y="198.1" width="2.0" height="2" fill="#777777" opacity="0.6"/><rect x="2640.0" y="202.2" width="2.0" height="2" fill="#777777" opacity="0.6"/><rect x="2644.0" y="202.2" width="26.0" height="2" fill="#4a77a6" opacity="0.6"/><rect x="2670.0" y="202.2" width="2.0" height="2" fill="#777777" opacity="0.6"/><rect x="2674.0" y="202.2" width="4.0" height="2" fill="#7f9a78" opacity="0.6"/><rect x="2636.0" y="206.2" width="18.0" height="2" fill="#4a77a6" opacity="0.6"/><rect x="2654.0" y="206.2" width="2.0" height="2" fill="#777777" opacity="0.6"/><rect x="2640.0" y="210.2" width="12.0" height="2" fill="#4a77a6" opacity="0.6"/><rect x="2652.0" y="210.2" width="2.0" height="2" fill="#777777" opacity="0.6"/><rect x="2644.0" y="214.3" width="6.0" height="2" fill="#4a77a6" opacity="0.6"/><rect x="2650.0" y="214.3" width="2.0" height="2" fill="#777777" opacity="0.6"/><rect x="2654.0" y="214.3" width="12.0" height="2" fill="#9c7460" opacity="0.6"/><rect x="2640.0" y="218.4" width="16.0" height="2" fill="#4a77a6" opacity="0.6"/><rect x="2656.0" y="218.4" width="2.0" height="2" fill="#777777" opacity="0.6"/><rect x="2644.0" y="222.4" width="6.0" height="2" fill="#4a77a6" opacity="0.6"/><rect x="2650.0" y="222.4" width="2.0" height="2" fill="#777777" opacity="0.6"/><rect x="2654.0" y="222.4" width="12.0" height="2" fill="#9c7460" opacity="0.6"/></svg>
<div class="a" style="left:2852px;top:92px;width:1px;height:976px;background:#2b2b2b;"></div>
<div class="a" style="left:2853px;top:452px;width:27px;height:5px;background:#5a5a5a;"></div>
<div class="a" style="left:893px;top:1088.03px;line-height:34px;font-size:23px;font-family:'Liberation Sans';font-weight:normal;font-style:normal;color:#9d9d9d;-webkit-text-stroke:0.4px #9d9d9d;letter-spacing:-1.1px">PROBLEMS</div>
<div class="a" style="left:1060px;top:1088.03px;line-height:34px;font-size:23px;font-family:'Liberation Sans';font-weight:normal;font-style:normal;color:#9d9d9d;-webkit-text-stroke:0.4px #9d9d9d;letter-spacing:-1.1px">OUTPUT</div>
<div class="a" style="left:1200px;top:1088.03px;line-height:34px;font-size:23px;font-family:'Liberation Sans';font-weight:normal;font-style:normal;color:#9d9d9d;-webkit-text-stroke:0.4px #9d9d9d;letter-spacing:-1.1px">DEBUG CONSOLE</div>
<div class="a" style="left:1438px;top:1088.03px;line-height:34px;font-size:23px;font-family:'Liberation Sans';font-weight:normal;font-style:normal;color:#e7e7e7;-webkit-text-stroke:0.4px #e7e7e7;letter-spacing:-1.1px">TERMINAL</div>
<div class="a" style="left:1597px;top:1088.03px;line-height:34px;font-size:23px;font-family:'Liberation Sans';font-weight:normal;font-style:normal;color:#9d9d9d;-webkit-text-stroke:0.4px #9d9d9d;letter-spacing:-1.1px">PORTS</div>
<div class="a" style="left:1718px;top:1088.03px;line-height:34px;font-size:23px;font-family:'Liberation Sans';font-weight:normal;font-style:normal;color:#9d9d9d;-webkit-text-stroke:0.4px #9d9d9d;letter-spacing:-1.1px">COMMENTS</div>
<div class="a" style="left:1433px;top:1125px;width:120px;height:4px;background:#0078d4;"></div>
<svg width="2880" height="1612"><g fill="none" stroke="#cccccc" stroke-width="2.4"><rect x="2456" y="1091" width="27" height="28" rx="3"/><path d="M2462 1097 L2469 1103.5 L2462 1110 M2469 1112 H2478"/><path d="M2547 1104 H2574 M2560.5 1091 V1117"/><path d="M2584 1101 L2592 1108 L2600 1101" stroke-width="2"/><rect x="2624" y="1091" width="26" height="26" rx="3"/><path d="M2637 1091 V1117"/><path d="M2672 1095 H2694 M2678 1095 V1092 H2688 V1095 M2675 1095 V1115 a2 2 0 0 0 2 2 H2689 a2 2 0 0 0 2 -2 V1095 M2680 1099 V1113 M2683 1099 V1113 M2686 1099 V1113" stroke-width="2.2"/><path d="M2773 1109 L2782.5 1099 L2792 1109"/><path d="M2825 1095 L2842 1112 M2842 1095 L2825 1112"/></g><g fill="#cccccc"><circle cx="2720" cy="1105" r="2.6"/><circle cx="2731" cy="1105" r="2.6"/><circle cx="2742" cy="1105" r="2.6"/></g></svg>
<div class="a" style="left:2493px;top:1085.68px;line-height:36px;font-size:24px;font-family:'Liberation Sans';font-weight:bold;font-style:normal;color:#cccccc;-webkit-text-stroke:0.4px #cccccc;">zsh</div>
<div class="a" style="left:892px;top:1158.28px;line-height:35px;font-size:23.35px;font-family:'Liberation Mono';font-weight:normal;font-style:normal;color:#cccccc;-webkit-text-stroke:0.5px #cccccc;">bogdanfylypiv@Bogdans–MacBook–Pro–2 SwiftCart % kubectl get nodes ––show–labels</div>
<div class="a" style="left:866px;top:1166px;width:16px;height:16px;border-radius:50%;background:#4a8cbf"></div>
<div class="a" style="left:892px;top:1186.28px;line-height:35px;font-size:23.35px;font-family:'Liberation Mono';font-weight:normal;font-style:normal;color:#cccccc;-webkit-text-stroke:0.5px #cccccc;">NAME       STATUS   ROLES           AGE   VERSION   LABELS</div>
<div class="a" style="left:892px;top:1214.28px;line-height:35px;font-size:23.35px;font-family:'Liberation Mono';font-weight:normal;font-style:normal;color:#cccccc;-webkit-text-stroke:0.5px #cccccc;">minikube   Ready    control–plane   16m   v1.32.0   beta.kubernetes.io/arch=arm64,beta.kubernetes.io/os=linux,kubernetes.io/arch=arm64,kuber</div>
<div class="a" style="left:892px;top:1242.28px;line-height:35px;font-size:23.35px;font-family:'Liberation Mono';font-weight:normal;font-style:normal;color:#cccccc;-webkit-text-stroke:0.5px #cccccc;">netes.io/hostname=minikube,kubernetes.io/os=linux,minikube.k8s.io/commit=dd5d320e41b5451cdf3c01891bc4e13d189586ed,minikube.k8s.io/name=minik</div>
<div class="a" style="left:892px;top:1270.28px;line-height:35px;font-size:23.35px;font-family:'Liberation Mono';font-weight:normal;font-style:normal;color:#cccccc;-webkit-text-stroke:0.5px #cccccc;">ube,minikube.k8s.io/primary=true,minikube.k8s.io/updated_at=2025_02_25T17_13_32_0700,minikube.k8s.io/version=v1.35.0,node–role.kubernetes.io</div>
<div class="a" style="left:892px;top:1298.28px;line-height:35px;font-size:23.35px;font-family:'Liberation Mono';font-weight:normal;font-style:normal;color:#cccccc;-webkit-text-stroke:0.5px #cccccc;">/control–plane=,node.kubernetes.io/exclude–from–external–load–balancers=</div>
<div class="a" style="left:892px;top:1326.28px;line-height:35px;font-size:23.35px;font-family:'Liberation Mono';font-weight:normal;font-style:normal;color:#cccccc;-webkit-text-stroke:0.5px #cccccc;">bogdanfylypiv@Bogdans–MacBook–Pro–2 SwiftCart % kubectl label node minikube kubernetes.io/e2e–az–name=e2e–az1</div>
<div class="a" style="left:866px;top:1334px;width:16px;height:16px;border-radius:50%;background:#4a8cbf"></div>
<div class="a" style="left:892px;top:1354.28px;line-height:35px;font-size:23.35px;font-family:'Liberation Mono';font-weight:normal;font-style:normal;color:#cccccc;-webkit-text-stroke:0.5px #cccccc;">node/minikube labeled</div>
<div class="a" style="left:892px;top:1382.28px;line-height:35px;font-size:23.35px;font-family:'Liberation Mono';font-weight:normal;font-style:normal;color:#cccccc;-webkit-text-stroke:0.5px #cccccc;">bogdanfylypiv@Bogdans–MacBook–Pro–2 SwiftCart % kubectl apply –f nginx–deployment.yaml</div>
<div class="a" style="left:866px;top:1390px;width:16px;height:16px;border-radius:50%;background:#4a8cbf"></div>
<div class="a" style="left:892px;top:1410.28px;line-height:35px;font-size:23.35px;font-family:'Liberation Mono';font-weight:normal;font-style:normal;color:#cccccc;-webkit-text-stroke:0.5px #cccccc;">deployment.apps/nginx–deployment configured</div>
<div class="a" style="left:892px;top:1438.28px;line-height:35px;font-size:23.35px;font-family:'Liberation Mono';font-weight:normal;font-style:normal;color:#cccccc;-webkit-text-stroke:0.5px #cccccc;">bogdanfylypiv@Bogdans–MacBook–Pro–2 SwiftCart % </div>
<div class="a" style="left:866px;top:1446px;width:16px;height:16px;border-radius:50%;border:2px solid #5f5f5f"></div>
<div class="a" style="left:1564px;top:1442px;width:14px;height:26px;background:#cccccc;"></div>
<div class="a" style="left:2852px;top:1070px;width:28px;height:542px;background:#181818;"></div>
<div class="a" style="left:2852px;top:1339px;width:28px;height:273px;background:#3c3c3c;"></div>
<div class="a" style="left:2852px;top:1160px;width:10px;height:12px;background:#4a8cbf;"></div>
<div class="a" style="left:2852px;top:1315px;width:10px;height:24px;background:#4a8cbf;"></div>
<div class="a" style="left:2852px;top:1371px;width:10px;height:24px;background:#4a8cbf;"></div>
<div class="a" style="left:2852px;top:1427px;width:10px;height:23px;background:#6b6b6b;"></div>
<div class="a" style="left:851px;top:1576px;width:0px;height:0px;background:#000;"></div>
<div class="a" style="left:96px;top:1576px;width:754px;height:1px;background:#2b2b2b;"></div>
<svg width="2880" height="1612"><path d="M112 1591 L121.5 1600.5 L112 1610" fill="none" stroke="#cccccc" stroke-width="2.4"/></svg>
<div class="a" style="left:136px;top:1584.20px;line-height:34px;font-size:22.5px;font-family:'Liberation Sans';font-weight:bold;font-style:normal;color:#cccccc;-webkit-text-stroke:0.4px #cccccc;">OUTLINE</div>
<svg width="2880" height="1612"><path d="M153.36 194.5 L146 203.0 L153.36 211.5 M158.64 194.5 L166 203.0 L158.64 211.5" fill="none" stroke="#c07a55" stroke-width="3.4" stroke-linejoin="miter"/><path d="M152.5 236.4 Q148.0 236.4 148.0 239.5 V242.75 Q148.0 245.75 145.0 245.75 Q148.0 245.75 148.0 248.75 V252.0 Q148.0 255.1 152.5 255.1 M158.5 236.4 Q163.0 236.4 163.0 239.5 V242.75 Q163.0 245.75 166.0 245.75 Q163.0 245.75 163.0 248.75 V252.0 Q163.0 255.1 158.5 255.1" fill="none" stroke="#c4c46e" stroke-width="2.8"/><path d="M152.5 280.4 Q148.0 280.4 148.0 283.5 V286.75 Q148.0 289.75 145.0 289.75 Q148.0 289.75 148.0 292.75 V296.0 Q148.0 299.1 152.5 299.1 M158.5 280.4 Q163.0 280.4 163.0 283.5 V286.75 Q163.0 289.75 166.0 289.75 Q163.0 289.75 163.0 292.75 V296.0 Q163.0 299.1 158.5 299.1" fill="none" stroke="#c4c46e" stroke-width="2.8"/><text x="145" y="341.7" font-family="Liberation Sans" font-weight="bold" font-size="23.0" textLength="21.5" lengthAdjust="spacingAndGlyphs" fill="#c4c46e" stroke="#c4c46e" stroke-width="0.4">JS</text><g stroke="#6aa3c6" stroke-width="3.4" fill="none"><path d="M154.27 368.5 L152.05 387.5 M161.3 368.5 L159.08 387.5"/><path d="M147.425 374.58 H165.0 M146.5 381.42 H164.075"/></g><path d="M138.7 410 H144.0 L142.1 425.51 H138.1 Z" fill="#9c7fc4"/><ellipse cx="138.9" cy="430.68" rx="3.2" ry="2.6" fill="#9c7fc4"/><text x="881.5" y="20.6" font-family="Liberation Sans" font-weight="bold" font-size="21.6" textLength="20.5" lengthAdjust="spacingAndGlyphs" fill="#c4c46e" stroke="#c4c46e" stroke-width="0.4">JS</text><path d="M1129.3 4.8 L1122.7 12.55 L1129.3 20.3 M1134.1000000000001 4.8 L1140.7 12.55 L1134.1000000000001 20.3" fill="none" stroke="#c07a55" stroke-width="3.4" stroke-linejoin="miter"/><path d="M1378.7 1.5 H1384.0 L1382.1 16.68 H1378.1 Z" fill="#9c7fc4"/><ellipse cx="1378.9" cy="21.74" rx="3.2" ry="2.6" fill="#9c7fc4"/><g stroke="#6aa3c6" stroke-width="3.4" fill="none"><path d="M1782.144 4.2 L1779.96 21.7 M1789.06 4.2 L1786.876 21.7"/><path d="M1775.41 9.8 H1792.7 M1774.5 16.1 H1791.79"/></g></svg>
</div></body></html>
